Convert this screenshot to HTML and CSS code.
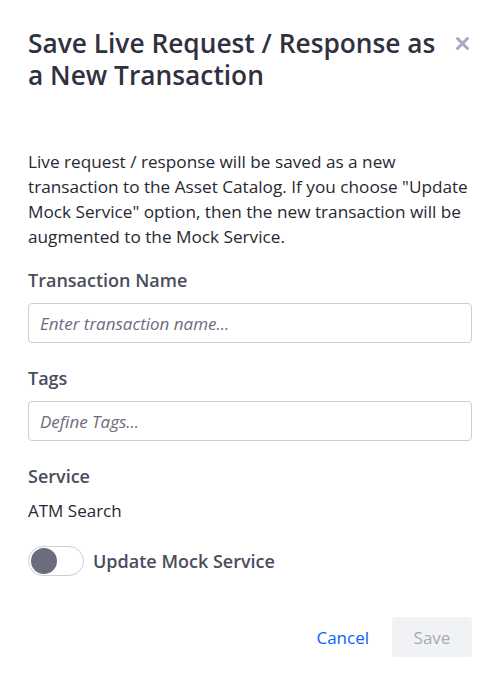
FILE: index.html
```html
<!DOCTYPE html>
<html>
<head>
<meta charset="utf-8">
<link rel="stylesheet" href="styles.css">
</head>
<body>
<div class="modal">
  <div class="header">
    <h1 class="title">Save Live Request / Response as a New Transaction</h1>
    <button class="close" aria-label="Close">
      <svg width="15" height="15" viewBox="0 0 15 15"><path d="M2.5 2.5 L12.5 12.5 M12.5 2.5 L2.5 12.5" stroke="#a7a9bc" stroke-width="3" stroke-linecap="round"/></svg>
    </button>
  </div>
  <div class="body">
    <p class="desc">Live request / response will be saved as a new transaction to the Asset Catalog. If you choose "Update Mock Service" option, then the new transaction will be augmented to the Mock Service.</p>
    <div class="field">
      <label class="label">Transaction Name</label>
      <div class="input">Enter transaction name...</div>
    </div>
    <div class="field">
      <label class="label">Tags</label>
      <div class="input">Define Tags...</div>
    </div>
    <div class="field">
      <label class="label">Service</label>
      <div class="value">ATM Search</div>
    </div>
    <div class="toggle-row">
      <span class="toggle"><span class="knob"></span></span>
      <span class="toggle-label">Update Mock Service</span>
    </div>
    <div class="footer">
      <button class="btn-link">Cancel</button>
      <button class="btn-save">Save</button>
    </div>
  </div>
</div>
</body>
</html>
```
FILE: styles.css
```css
* { box-sizing: border-box; }
html, body { margin: 0; padding: 0; background: #fff; }
body {
  font-family: "Open Sans", "Liberation Sans", sans-serif;
  color: #272833;
  width: 500px;
  height: 678px;
}
.modal {
  padding: 27px 28px 0 28px;
}
.header {
  display: flex;
  align-items: flex-start;
  justify-content: space-between;
}
.title {
  margin: 0;
  font-size: 26.3px;
  font-weight: 600;
  line-height: 32px;
  color: #30313f;
  max-width: 418px;
}
.close {
  border: 0;
  background: none;
  padding: 0;
  margin: 9px 2px 0 0;
  width: 15px;
  height: 15px;
  display: flex;
  align-items: center;
  justify-content: center;
}
.body {
  padding-top: 58px;
}
.desc {
  margin: 0 0 19px 0;
  font-size: 17.2px;
  line-height: 25px;
  color: #272833;
}
.field {
  margin-bottom: 23px;
}
.label {
  display: block;
  font-size: 18px;
  font-weight: 600;
  color: #4b4d5c;
  line-height: 24px;
  margin-bottom: 11px;
}
.input {
  height: 40px;
  border: 1px solid #cdced9;
  border-radius: 4px;
  padding: 0 11px;
  display: flex;
  align-items: center;
  font-size: 17px;
  font-style: italic;
  color: #6b6c7e;
}
.value {
  font-size: 17px;
  color: #272833;
  line-height: 24px;
  margin-top: 2px;
}
.toggle-row {
  display: flex;
  align-items: center;
  gap: 9px;
  margin-top: 13px;
}
.toggle {
  width: 56px;
  height: 30px;
  border: 1px solid #cdced9;
  border-radius: 15px;
  background: #fff;
  display: flex;
  align-items: center;
  padding-left: 2px;
}
.knob {
  width: 26px;
  height: 26px;
  border-radius: 50%;
  background: #6b6c7e;
}
.toggle-label {
  font-size: 18px;
  font-weight: 600;
  color: #4b4d5c;
}
.footer {
  display: flex;
  justify-content: flex-end;
  align-items: center;
  gap: 23px;
  margin-top: 41px;
}
.btn-link {
  border: 0;
  background: none;
  padding: 0;
  font-family: inherit;
  font-size: 17px;
  color: #0b5fff;
}
.btn-save {
  border: 0;
  background: #f1f2f5;
  border-radius: 4px;
  width: 80px;
  height: 40px;
  font-family: inherit;
  font-size: 17px;
  color: #a7a9bc;
}
```
